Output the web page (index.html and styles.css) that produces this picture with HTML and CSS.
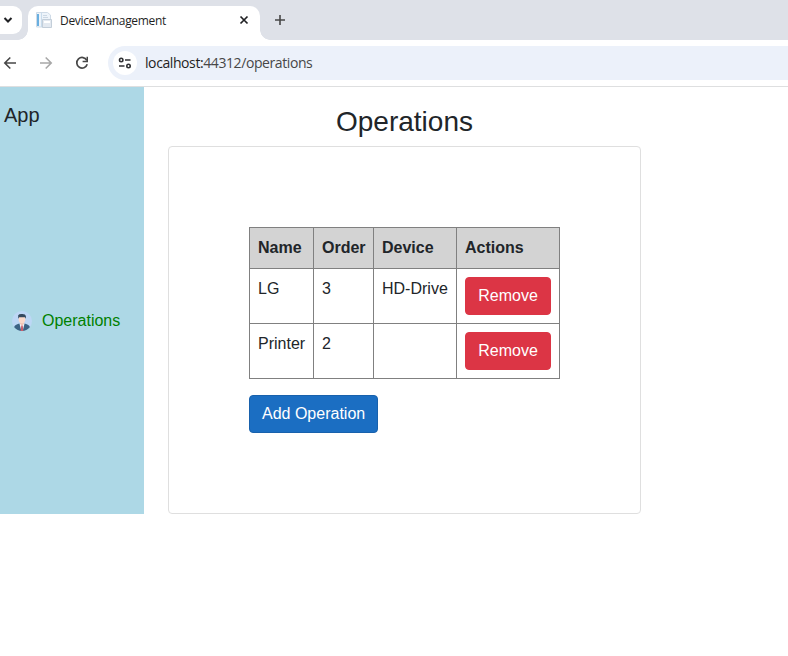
FILE: index.html
```
<!DOCTYPE html>
<html lang="en">
<head>
<meta charset="utf-8">
<title>DeviceManagement</title>
<link rel="stylesheet" href="styles.css">
</head>
<body>
<header class="browser">
  <div class="tabstrip">
    <div class="tab-search"><svg width="10" height="8" viewBox="0 0 10 8"><path d="M1.500 2 5 5.500 8.500 2" fill="none" stroke="#202124" stroke-width="2"/></svg></div>
    <div class="tab">
      <svg class="favicon" width="16" height="16" viewBox="0 0 16 16">
        <path d="M.5 .5h11l3 2.500v12H.5z" fill="#eef4fa" stroke="#cfdbe7"/>
        <path d="M1 2h2v12H1z" fill="#69afe0"/>
        <path d="M5.500 1v14" stroke="#c9dcec"/>
        <path d="M7 3.500h4M7 5.500h5" stroke="#ccd8e4"/>
        <path d="M6.500 7.500h9v8h-9z" fill="#e3e9f0" stroke="#c3ced9"/>
        <path d="M8 9h6v2H8z" fill="#fff"/>
      </svg>
      <span class="tab-title">DeviceManagement</span>
      <svg class="close" width="10" height="10" viewBox="0 0 10 10"><path d="m1.500 1.500 7 7m0-7-7 7" stroke="#202124" stroke-width="1.700"/></svg>
    </div>
    <svg class="plus" width="12" height="12" viewBox="0 0 12 12"><path d="M6 1v10M1 6h10" stroke="#474747" stroke-width="1.600"/></svg>
  </div>
  <div class="toolbar">
    <svg class="back" width="14" height="14" viewBox="0 0 14 14"><path d="M13 7H2M7.300 1.500 1.800 7l5.500 5.500" fill="none" stroke="#474747" stroke-width="1.600"/></svg>
    <svg class="forward" width="14" height="14" viewBox="0 0 14 14"><path d="M1 7h11M6.700 1.500 12.200 7l-5.500 5.500" fill="none" stroke="#a8a8a8" stroke-width="1.600"/></svg>
    <svg class="reload" width="14" height="14" viewBox="0 0 14 14"><path d="M11.800 4.300A5.300 5.300 0 1 0 12.200 8.300" fill="none" stroke="#474747" stroke-width="1.700"/><path d="M13 .8v5.400H7.600V4.700h3.900V.8z" fill="#474747"/></svg>
    <div class="omnibox">
      <div class="site-info"><svg width="14" height="14" viewBox="0 0 14 14"><g fill="none" stroke="#303134" stroke-width="1.600"><circle cx="3.200" cy="4" r="1.700"/><path d="M7 4h5.500M1 10h5.500"/><circle cx="10.500" cy="10" r="1.700"/></g></svg></div>
      <span class="url"><span class="host">localhost:</span>44312/operations</span>
    </div>
  </div>
</header>
<div class="page">
  <nav class="sidebar">
    <div class="brand">App</div>
    <a class="nav-link">
      <svg width="20" height="20" viewBox="0 0 20 20">
        <circle cx="10" cy="10" r="10" fill="#bdd7f5"/>
        <path d="M2.200 16.200Q2.500 14 6.500 12.800h7q4 1.200 4.300 3.400a10 10 0 0 1-15.600 0z" fill="#3b6384"/>
        <path d="m7.500 12.800 2.500-1 2.500 1-1.500 6h-2z" fill="#f3f5f8"/>
        <path d="M8.200 10h3.600v3L10 14.800 8.200 13z" fill="#f2c4b3"/>
        <path d="M9.300 14.500h1.400l.6 5.400H8.700z" fill="#c95f6c"/>
        <ellipse cx="10" cy="8.300" rx="3.300" ry="3.900" fill="#fbd9ca"/>
        <path d="M6.200 7.800V4.300Q7 2.800 10 3q3.500-.2 3.900 2v2.800l-1-1.500H7.200z" fill="#34495e"/>
      </svg>
      <span>Operations</span>
    </a>
  </nav>
  <main class="content">
    <h1>Operations</h1>
    <section class="card">
      <table>
        <thead><tr><th class="name">Name</th><th class="order">Order</th><th class="device">Device</th><th class="actions">Actions</th></tr></thead>
        <tbody>
          <tr><td>LG</td><td>3</td><td>HD-Drive</td><td><button class="btn remove">Remove</button></td></tr>
          <tr><td>Printer</td><td>2</td><td></td><td><button class="btn remove">Remove</button></td></tr>
        </tbody>
      </table>
      <button class="btn add">Add Operation</button>
    </section>
  </main>
</div>
</body>
</html>
```
FILE: styles.css
```
* { box-sizing: border-box; }
body { margin: 0; background: #fff; color: #212529; font: 16px/24px "Liberation Sans", Arial, sans-serif; overflow: hidden; }
svg { display: block; flex: none; }
.browser { height: 87px; border-bottom: 1px solid #dedfe0; font-family: "Open Sans", "Segoe UI", sans-serif; }
.tabstrip { display: flex; height: 40px; padding-top: 6px; background: #dee1e8; }
.tab-search { display: flex; align-items: center; justify-content: flex-end; width: 22px; height: 28px; padding-right: 9px; margin-right: 6px; background: #fff; border-radius: 0 9px 9px 0; }
.tab { position: relative; display: flex; align-items: center; width: 232px; height: 34px; padding: 0 11px 5px 8px; background: #fff; border-radius: 10px 10px 0 0; }
.tab::before, .tab::after { content: ""; position: absolute; bottom: 0; width: 10px; height: 10px; }
.tab::before { left: -10px; background: radial-gradient(circle at 0 0, transparent 9.500px, #fff 10px); }
.tab::after { right: -10px; background: radial-gradient(circle at 100% 0, transparent 9.500px, #fff 10px); }
.favicon { margin-top: -1px; }
.tab-title { margin-left: 8px; font-size: 12px; line-height: 18px; color: #1f1f1f; letter-spacing: -.33px; }
.close { margin: -1px 0 0 auto; }
.plus { margin: 8px 0 0 14px; }
.toolbar { display: flex; align-items: center; height: 46px; padding-left: 3px; }
.forward { margin-left: 22px; }
.reload { margin-left: 22px; }
.omnibox { display: flex; align-items: center; flex: 1; height: 34px; margin-left: 19px; padding-left: 5px; background: #ecf1fa; border-radius: 17px 0 0 17px; }
.site-info { display: flex; align-items: center; justify-content: center; width: 24px; height: 24px; background: #fff; border-radius: 50%; }
.url { margin-left: 8px; font-size: 14px; line-height: 20px; color: #474747; letter-spacing: -.41px; }
.host { color: #1f1f1f; }
.page { display: flex; height: 427px; }
.sidebar { display: flex; flex-direction: column; width: 144px; background: #add8e6; }
.brand { padding: 13px 4px 0; font-size: 20px; line-height: 30px; color: #212529; }
.nav-link { display: flex; align-items: center; gap: 10px; margin-top: 179px; padding-left: 12px; color: green; }
.content { width: 473px; margin-left: 24px; }
h1 { margin: 0; padding-top: 18px; height: 59px; font-size: 28px; font-weight: 400; line-height: 34px; text-align: center; }
.card { height: 368px; padding: 80px; border: 1px solid #dfdfdf; border-radius: 4px; }
table { border-collapse: collapse; table-layout: fixed; width: 311px; margin-bottom: 16px; }
th, td { border: 1px solid gray; padding: 8px; text-align: left; vertical-align: top; white-space: nowrap; }
th { background: #d3d3d3; }
.name { width: 64px; }
.order { width: 60px; }
.device { width: 83px; }
.btn { display: block; height: 38px; padding: 6px 12px; border: 1px solid; border-radius: 4px; color: #fff; font: inherit; white-space: nowrap; }
.remove { width: 86px; background: #dc3545; border-color: #dc3545; }
.add { width: 129px; background: #1b6ec2; border-color: #1861ac; }
```
